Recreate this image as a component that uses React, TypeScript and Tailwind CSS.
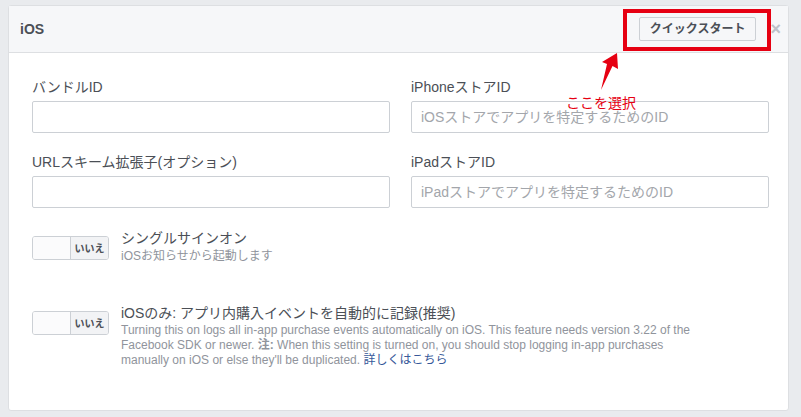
import React from "react";

const font = { fontFamily: '"Liberation Sans", "Noto Sans CJK JP", sans-serif' };

function Field({ label, placeholder }: { label: string; placeholder?: string }) {
  return (
    <div className="flex flex-col">
      <div className="text-[14px] leading-[18px] text-[#4b4f56]">{label}</div>
      <input
        className="mt-[5px] h-[32px] w-full rounded-[2px] border border-[#ccd0d5] bg-white px-[9px] text-[14px] text-[#1d2129] outline-none placeholder:text-[#a3a6ab]"
        placeholder={placeholder}
        style={font}
      />
    </div>
  );
}

function Toggle() {
  return (
    <div className="flex h-[24px] w-[77px] shrink-0 overflow-hidden rounded-[3px] border border-[#ccd0d5]">
      <div className="w-[38px] border-r border-[#ccd0d5] bg-[#fbfbfc]" />
      <div className="flex flex-1 items-center justify-center bg-[#f2f3f5] text-[10px] font-bold text-[#4b4f56]">いいえ</div>
    </div>
  );
}

export default function App() {
  return (
    <div className="h-[417px] w-[801px] bg-[#e9ebee] pl-[8px] pr-[12px] pt-[5px]" style={font}>
      <div className="relative flex h-[406px] flex-col rounded-[3px] border border-[#dddfe2] bg-white">
        {/* header */}
        <div className="flex h-[47px] items-center border-b border-[#dddfe2] bg-[#f6f7f9] pl-[11px] pr-[7px]">
          <div className="text-[14px] font-bold text-[#4b4f56]">iOS</div>
          <div className="flex-1" />
          <button className="h-[24px] rounded-[2px] border border-[#ccd0d5] bg-[#f6f7f9] px-[10px] text-[12px] font-bold text-[#4b4f56]">
            クイックスタート
          </button>
          <div className="ml-[14px] text-[18px] font-bold leading-none text-[#bec2c9]">×</div>
        </div>

        {/* body */}
        <div className="flex flex-col pl-[23px] pr-[19px] pt-[25px]">
          <div className="grid grid-cols-2 gap-x-[21px] gap-y-[20px]">
            <Field label="バンドルID" />
            <Field label="iPhoneストアID" placeholder="iOSストアでアプリを特定するためのID" />
            <Field label="URLスキーム拡張子(オプション)" />
            <Field label="iPadストアID" placeholder="iPadストアでアプリを特定するためのID" />
          </div>

          <div className="mt-[28px] flex items-start">
            <Toggle />
            <div className="ml-[12px] -mt-[8px] flex flex-col">
              <div className="text-[14px] leading-[20px] text-[#4b4f56]">シングルサインオン</div>
              <div className="text-[12px] leading-[16px] text-[#90949c]">iOSお知らせから起動します</div>
            </div>
          </div>

          <div className="mt-[47px] flex items-start">
            <Toggle />
            <div className="ml-[12px] -mt-[8px] flex w-[590px] flex-col">
              <div className="text-[14px] leading-[20px] text-[#4b4f56]">iOSのみ: アプリ内購入イベントを自動的に記録(推奨)</div>
              <p className="text-[12px] leading-[15px] text-[#90949c]">
                Turning this on logs all in-app purchase events automatically on iOS. This feature needs version 3.22 of the Facebook SDK or newer. <b>注:</b> When this setting is turned on, you should stop logging in-app purchases manually on iOS or else they'll be duplicated. <a className="text-[#365899]">詳しくはこちら</a>
              </p>
            </div>
          </div>
        </div>

        {/* annotation overlay */}
        <div className="absolute left-[614px] top-[3px] h-[42px] w-[148px] border-[4px] border-[#e60012]" />
        <svg className="absolute left-[580px] top-[39px]" width="40" height="50" viewBox="0 0 40 50">
          <path d="M28 8 L29 24 L23.5 21 L12 45 L18 19 L13 17 Z" fill="#e60012" />
        </svg>
        <div className="absolute left-[557px] top-[88px] text-[14px] leading-[18px] text-[#e60012]">ここを選択</div>
      </div>
    </div>
  );
}
